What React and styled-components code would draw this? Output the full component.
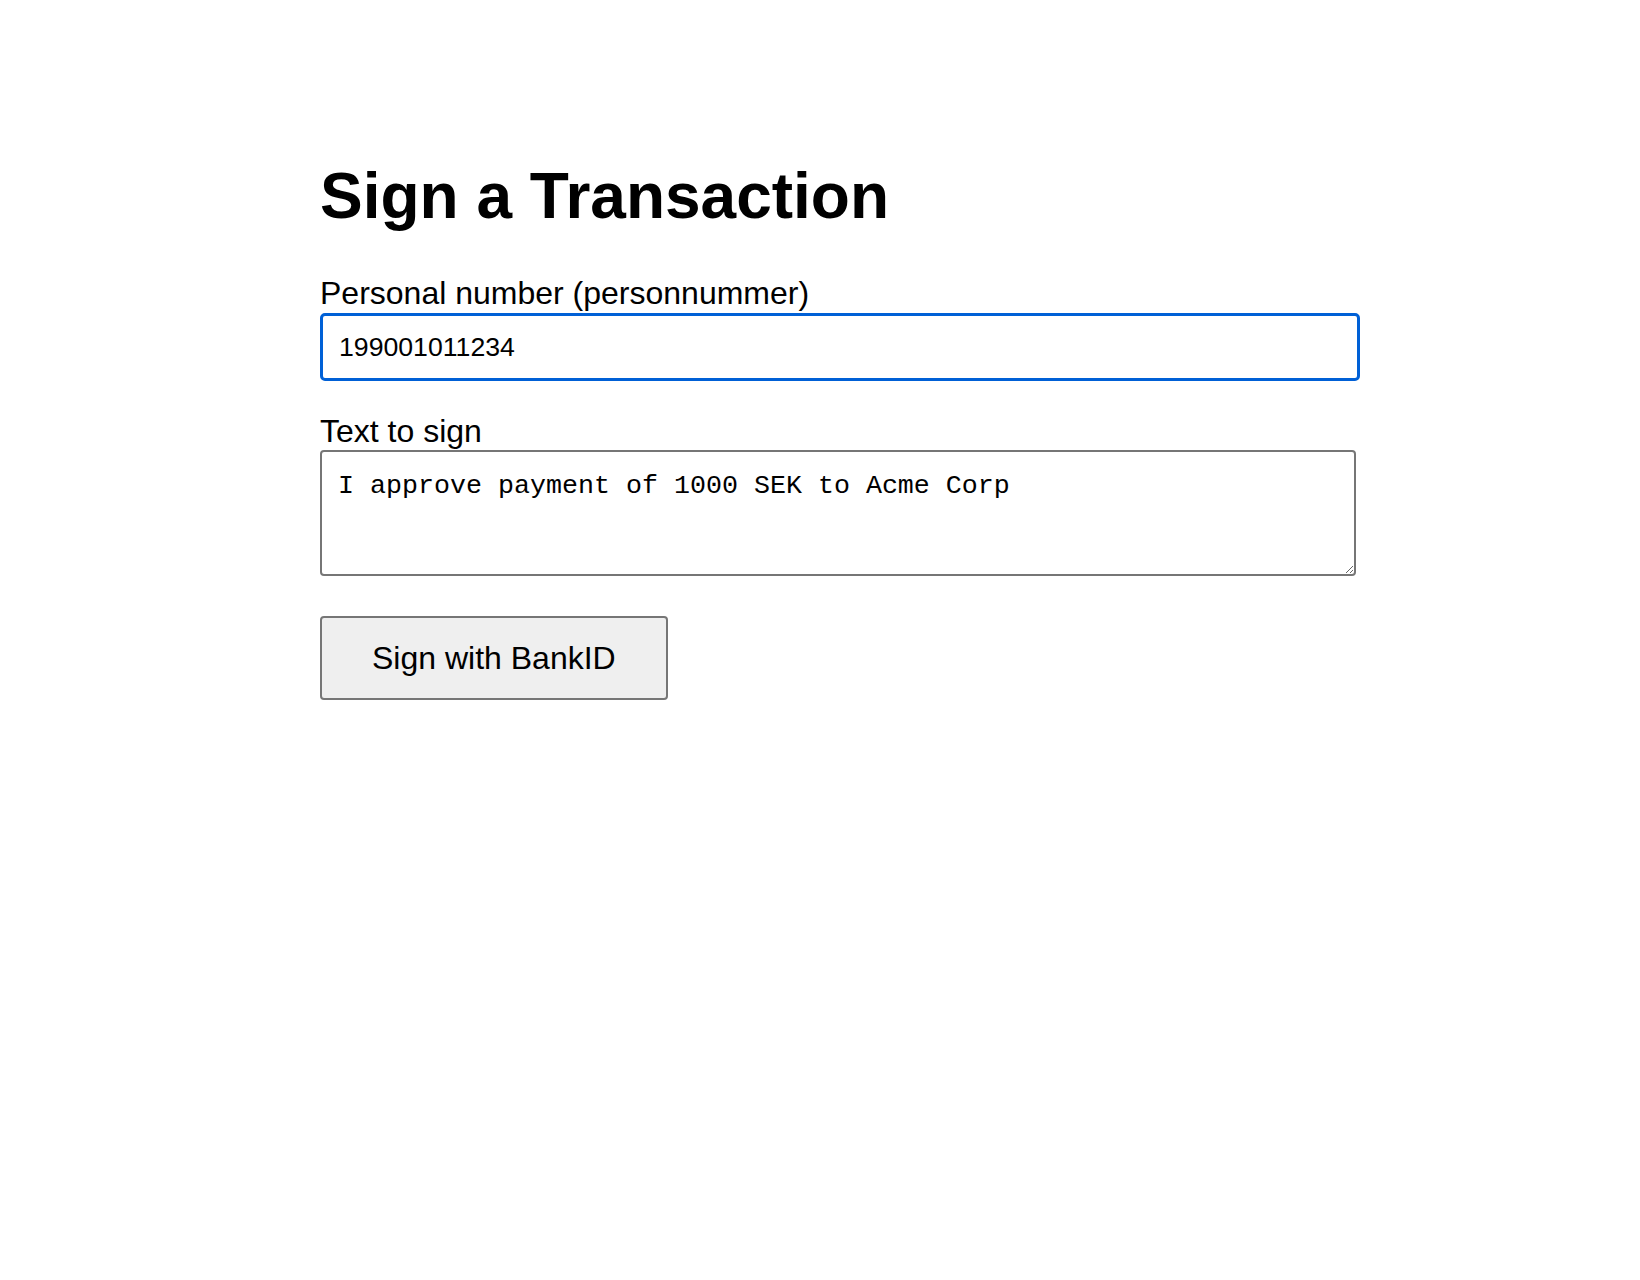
import React from "react";
import styled, { createGlobalStyle } from "styled-components";

const GlobalStyle = createGlobalStyle`
  html, body {
    margin: 0;
    padding: 0;
    background: #fff;
  }
  body {
    font-family: "Liberation Sans", Arial, Helvetica, sans-serif;
    color: #000;
  }
`;

const SignTransaction = () => {
  return (
    <Page>
      <GlobalStyle />
      <Title>Sign a Transaction</Title>
      <Form onSubmit={(e) => e.preventDefault()}>
        <Field $gap="1px" $spacing="32px">
          <Label htmlFor="pnr">Personal number (personnummer)</Label>
          <NumberInput
            id="pnr"
            name="pnr"
            type="text"
            defaultValue="199001011234"
            $focused
          />
        </Field>
        <Field $gap="0" $spacing="40px">
          <Label htmlFor="text">Text to sign</Label>
          <TextArea
            id="text"
            name="text"
            defaultValue="I approve payment of 1000 SEK to Acme Corp"
          />
        </Field>
        <SubmitButton type="submit">Sign with BankID</SubmitButton>
      </Form>
    </Page>
  );
};

const Page = styled.main`
  padding: 159px 0 0 320px;
  min-height: 1280px;
  box-sizing: border-box;
`;

const Title = styled.h1`
  margin: 0 0 42px;
  font-size: 64px;
  line-height: 74px;
  font-weight: 700;
`;

const Form = styled.form`
  display: flex;
  flex-direction: column;
  width: 1040px;
`;

const Field = styled.div`
  display: flex;
  flex-direction: column;
  gap: ${(p) => p.$gap};
  margin-bottom: ${(p) => p.$spacing};
`;

const Label = styled.label`
  font-size: 32px;
  line-height: 37px;
`;

const NumberInput = styled.input`
  box-sizing: border-box;
  width: 1040px;
  height: 68px;
  padding: 0 16px;
  font-family: "Liberation Sans", Arial, sans-serif;
  font-size: 26.67px;
  color: #000;
  background: #fff;
  border: 3px solid ${(p) => (p.$focused ? "#0060d6" : "#767676")};
  border-radius: 5px;
  outline: none;

  &:focus {
    border-color: #0060d6;
  }
`;

const TextArea = styled.textarea`
  box-sizing: border-box;
  width: 1036px;
  height: 126px;
  padding: 19px 16px 16px;
  font-family: "Liberation Mono", "Courier New", monospace;
  font-size: 26.67px;
  line-height: 30px;
  color: #000;
  background: #fff;
  border: 2px solid #767676;
  border-radius: 4px;
  resize: vertical;
  outline: none;
`;

const SubmitButton = styled.button`
  align-self: flex-start;
  box-sizing: border-box;
  height: 84px;
  padding: 0 50px;
  font-family: "Liberation Sans", Arial, sans-serif;
  font-size: 32px;
  color: #000;
  background: #efefef;
  border: 2px solid #767676;
  border-radius: 4px;
  cursor: pointer;

  &:hover {
    background: #e5e5e5;
  }
`;

export default SignTransaction;
